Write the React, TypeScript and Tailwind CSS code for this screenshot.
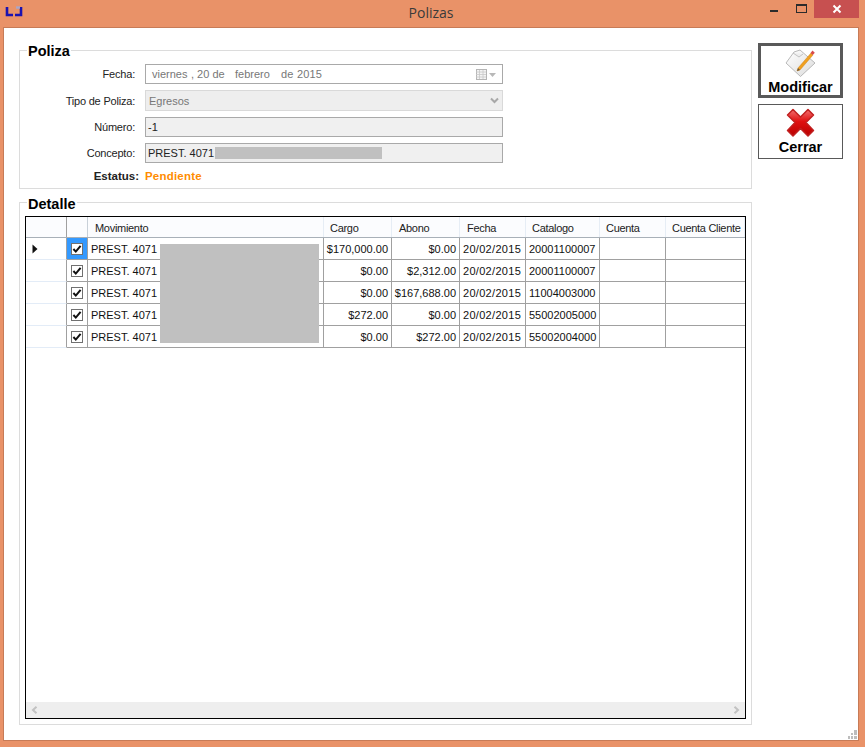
const rows = [
  ["$170,000.00", "$0.00", "20/02/2015", "20001100007"],
  ["$0.00", "$2,312.00", "20/02/2015", "20001100007"],
  ["$0.00", "$167,688.00", "20/02/2015", "11004003000"],
  ["$272.00", "$0.00", "20/02/2015", "55002005000"],
  ["$0.00", "$272.00", "20/02/2015", "55002004000"],
];

const cols = "grid grid-cols-[41px_21px_236px_68px_68px_66px_74px_66px_79px]";
const font = "font-['Liberation_Sans',Arial,sans-serif]";
const cell = "border-r border-b border-[#a0a0a0] flex items-center pt-[1px] whitespace-nowrap";

function Check() {
  return (
    <span className="w-[12px] h-[12px] bg-white border border-[#707070] flex items-center justify-center">
      <svg width="10" height="10" viewBox="0 0 10 10">
        <path d="M1.4 5 L3.8 7.6 L8.6 1.8" fill="none" stroke="#111" strokeWidth="2" />
      </svg>
    </span>
  );
}

function Head({ children }: { children?: React.ReactNode }) {
  return <div className="border-r border-[#e6edf5] pl-[6px] pt-[2px] flex items-center text-[#222] tracking-[-0.3px] whitespace-nowrap">{children}</div>;
}

function Field({ label, tall, children }: { label: string; tall?: boolean; children: React.ReactNode }) {
  return (
    <div className="flex items-center">
      <div className={`w-[115px] text-right text-[#222] tracking-[-0.2px] ${tall ? "pt-[2px]" : "pt-[1px]"}`}>{label}</div>
      <div className="ml-[10px] w-[358px]">{children}</div>
    </div>
  );
}

export default function App() {
  return (
    <div className={`w-[865px] h-[747px] bg-[#e99268] flex flex-col overflow-hidden text-[11px] ${font}`}>
      <div className="h-[27px] shrink-0 relative flex items-center justify-center">
        <svg className="absolute left-[5px] top-[6px]" width="18" height="11" viewBox="0 0 18 11">
          <path d="M2 1 V9 H8 M10 9 H16 V1" fill="none" stroke="#1a12b0" strokeWidth="2.6" />
          <path d="M11 1.5 H15" stroke="#a9a5c8" strokeWidth="2.4" />
        </svg>
        <span className="text-[14px] text-[#3a3a3a] font-['Open_Sans',sans-serif] -mt-[3px] ml-[-3px]">Polizas</span>
        <div className="absolute left-[770px] top-[10px] w-[8px] h-[2px] bg-[#2b2b2b]" />
        <div className="absolute left-[796px] top-[4px] w-[11px] h-[9px] border border-[#2b2b2b] border-t-2" />
        <div className="absolute left-[814px] top-0 w-[45px] h-[18px] bg-[#c75050] flex items-center justify-center">
          <svg width="10" height="10" viewBox="0 0 10 10">
            <path d="M1.5 1.5 L8.5 8.5 M8.5 1.5 L1.5 8.5" stroke="#fff" strokeWidth="2" />
          </svg>
        </div>
      </div>

      <div className="ml-[3px] w-[856px] h-[714px] shrink-0 border border-[#c77b57] bg-white relative flex pl-[15px] pt-[15px] gap-[6px]">
        <div className="w-[733px] flex flex-col gap-[6px]">
          <fieldset className="h-[146px] border border-[#dcdcdc] shrink-0">
            <legend className="ml-[7px] px-[1px] font-bold text-[14.5px] leading-[15px] text-black">
              <span className="block translate-y-[1px]">Poliza</span>
            </legend>
            <div className="flex flex-col mt-[6px]">
              <Field label="Fecha:">
                <div className="h-[20px] border border-[#a9a9a9] bg-white flex items-center text-[#777] pl-[6px] pt-[1px] whitespace-pre relative">
                  <span className="w-[39px]">viernes</span>
                  <span className="w-[44px]">, 20 de</span>
                  <span className="w-[46px]">febrero</span>
                  <span className="tracking-[0.2px]">de 2015</span>
                  <svg className="absolute right-[4px] top-[3px]" width="22" height="13" viewBox="0 0 22 13">
                    <rect x="0.5" y="1.5" width="10" height="10" fill="#f4f4f4" stroke="#b5b5b5" />
                    <path d="M0 4 H10 M0 6.5 H10 M0 9 H10 M3.5 2 V11 M7 2 V11" stroke="#c9c9c9" strokeWidth="0.8" />
                    <path d="M13 5 H20 L16.5 9 Z" fill="#b8b8b8" />
                  </svg>
                </div>
              </Field>
              <div className="mt-[6px]">
                <Field label="Tipo de Poliza:" tall>
                  <div className="h-[21px] border border-[#d9d9d9] bg-[#eeeeee] flex items-center justify-between text-[#777] pl-[3px] pr-[3px]">
                    <span className="pt-[2px]">Egresos</span>
                    <svg width="9" height="7" viewBox="0 0 9 7"><path d="M1 1.5 L4.5 5 L8 1.5" fill="none" stroke="#a8a8a8" strokeWidth="2" /></svg>
                  </div>
                </Field>
              </div>
              <div className="mt-[6px]">
                <Field label="Número:">
                  <div className="h-[20px] border border-[#a9a9a9] bg-[#f0f0f0] flex items-center text-[#222] pl-[2px] pt-[1px]">-1</div>
                </Field>
              </div>
              <div className="mt-[6px]">
                <Field label="Concepto:">
                  <div className="h-[20px] border border-[#a9a9a9] bg-[#f0f0f0] flex items-center text-[#222] pl-[2px]">
                    <span className="w-[67px] shrink-0 pt-[1px] whitespace-nowrap">PREST. 4071</span>
                    <span className="w-[167px] h-[12px] bg-[#c0c0c0]" />
                  </div>
                </Field>
              </div>
              <div className="flex items-center mt-[5px] font-bold text-[11.5px]">
                <div className="w-[119px] text-right text-[#222]">Estatus:</div>
                <div className="ml-[6px] text-[#ff8c00] tracking-[0.2px]">Pendiente</div>
              </div>
            </div>
          </fieldset>

          <fieldset className="h-[530px] border border-[#dcdcdc] shrink-0">
            <legend className="ml-[7px] px-[1px] font-bold text-[14.5px] leading-[15px] text-black">
              <span className="block translate-y-[2px]">Detalle</span>
            </legend>
            <div className="ml-[5px] mt-[6px] w-[721px] h-[503px] border border-black flex flex-col text-[#111]">
              <div className={`${cols} h-[21px] shrink-0 border-b border-[#a8b0b8] bg-[#fbfcfe]`}>
                <div className="border-r border-[#a0a0a0]" />
                <div className="border-r border-[#c8d0d8]" />
                <div className="border-r border-[#e6edf5] pl-[7px] pt-[2px] flex items-center text-[#222] tracking-[-0.3px]">Movimiento</div>
                <Head>Cargo</Head>
                <Head><span className="pl-[1px]">Abono</span></Head>
                <Head><span className="pl-[1px]">Fecha</span></Head>
                <Head>Catalogo</Head>
                <Head>Cuenta</Head>
                <Head>Cuenta Cliente</Head>
              </div>
              <div className="relative">
                {rows.map((r, i) => (
                  <div key={i} className={`${cols} h-[22px]`}>
                    <div className="border-r border-[#a0a0a0] border-b border-b-[#e3ecf7] bg-white flex items-center pl-[6px]">
                      {i === 0 && (
                        <svg width="6" height="10" viewBox="0 0 6 10"><path d="M0.5 0.5 L5.5 5 L0.5 9.5 Z" fill="#111" /></svg>
                      )}
                    </div>
                    <div className={`border-r border-b border-[#a0a0a0] flex items-center justify-center pt-[1px] ${i === 0 ? "bg-[#3399ff]" : "bg-white"}`}>
                      <Check />
                    </div>
                    <div className={`${cell} pl-[3px]`}>PREST. 4071</div>
                    <div className={`${cell} justify-end pr-[3px]`}>{r[0]}</div>
                    <div className={`${cell} justify-end pr-[3px]`}>{r[1]}</div>
                    <div className={`${cell} pl-[3px] tracking-[0.3px]`}>{r[2]}</div>
                    <div className={`${cell} pl-[3px]`}>{r[3]}</div>
                    <div className="border-r border-b border-[#a0a0a0]" />
                    <div className="border-b border-[#a0a0a0]" />
                  </div>
                ))}
                <div className="absolute left-[134px] top-[6px] w-[159px] h-[99px] bg-[#c0c0c0]" />
              </div>
              <div className="flex-1" />
              <div className="h-[16px] shrink-0 bg-[#eeeeee] flex items-center justify-between px-[5px]">
                <svg width="7" height="8" viewBox="0 0 7 8"><path d="M5.5 0.8 L2 4 L5.5 7.2" fill="none" stroke="#c2c2c2" strokeWidth="2" /></svg>
                <svg width="7" height="8" viewBox="0 0 7 8"><path d="M1.5 0.8 L5 4 L1.5 7.2" fill="none" stroke="#c2c2c2" strokeWidth="2" /></svg>
              </div>
            </div>
          </fieldset>
        </div>

        <div className="flex flex-col gap-[6px] w-[85px]">
          <div className="h-[55px] border-[3px] border-[#595959] flex flex-col items-center justify-end font-bold text-[14.5px] leading-[16px] text-black">
            <svg className="mb-[1px]" width="32" height="29" viewBox="0 0 32 29">
              <defs>
                <linearGradient id="pg" x1="0" y1="0" x2="1" y2="1">
                  <stop offset="0" stopColor="#ffffff" />
                  <stop offset="1" stopColor="#dcdcdc" />
                </linearGradient>
              </defs>
              <path d="M1 14 L9 3 L15 1 L30 14 L15.5 27.5 Z" fill="url(#pg)" stroke="#a8a8a8" strokeWidth="0.8" />
              <path d="M8 4 L14 8 L18 5" fill="#eeeeee" stroke="#b5b5b5" strokeWidth="0.8" />
              <path d="M13 19 L26 4 L28 6 L15 21 L12 22 Z" fill="#f0a020" stroke="#c47a10" strokeWidth="0.4" />
              <path d="M25.5 4 L27.5 1.5 L29.8 3.8 L27.8 6 Z" fill="#d84b4b" />
              <path d="M13 19 L15 21 L12 22 Z" fill="#6b5a40" />
            </svg>
            <span>Modificar</span>
          </div>
          <div className="h-[55px] border border-[#595959] flex flex-col items-center justify-end pb-[3px] font-bold text-[14.5px] leading-[16px] text-black">
            <svg className="mb-[1px]" width="29" height="30" viewBox="0 0 29 30">
              <defs>
                <linearGradient id="xg" x1="0" y1="0" x2="0" y2="1">
                  <stop offset="0" stopColor="#f27070" />
                  <stop offset="0.45" stopColor="#e01010" />
                  <stop offset="1" stopColor="#b80000" />
                </linearGradient>
              </defs>
              <path d="M7 1.5 L14.5 9 L22 1.5 L27.5 7 L20 14.5 L27.5 22.5 L22 28 L14.5 20.5 L7 28 L1.5 22.5 L9 14.5 L1.5 7 Z" fill="url(#xg)" stroke="#c02020" strokeWidth="1.5" strokeLinejoin="round" />
            </svg>
            <span>Cerrar</span>
          </div>
        </div>

        <svg className="absolute right-[1px] bottom-[1px]" width="9" height="9" viewBox="0 0 9 9">
          <path d="M6 0 h3 v3 h-3 Z M3 3 h2 v2 h-2 Z M6 3 h3 v2 h-3 Z M0 6 h2 v3 h-2 Z M3 6 h2 v3 h-2 Z M6 6 h3 v3 h-3 Z" fill="#bdbdbd" />
        </svg>
      </div>
    </div>
  );
}
